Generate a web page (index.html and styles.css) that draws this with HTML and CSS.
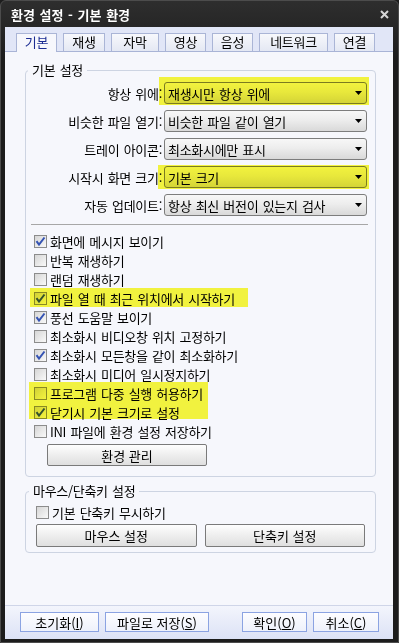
FILE: index.html
```html
<!DOCTYPE html>
<html lang="ko">
<head>
    <meta charset="UTF-8">
    <meta name="viewport" content="width=device-width, initial-scale=1.0">
    <title>환경 설정 - 기본 환경</title>
    <link rel="stylesheet" href="styles.css">
</head>
<body>
    <div class="window">
        <header class="titlebar">
            <span class="title">환경 설정 - 기본 환경</span>
            <svg class="close" width="9" height="9" viewBox="0 0 9 9">
                <path d="M1 1L8 8M8 1L1 8" stroke="#d6d6d6" stroke-width="2"/>
            </svg>
        </header>
        <div class="client">
            <nav class="tabs">
                <span class="tab active">기본</span>
                <span class="tab w42">재생</span>
                <span class="tab w48">자막</span>
                <span class="tab">영상</span>
                <span class="tab">음성</span>
                <span class="tab w69">네트워크</span>
                <span class="tab">연결</span>
            </nav>
            <main class="page">
                <fieldset class="group">
                    <legend>기본 설정</legend>
                    <div class="fields">
                        <label>항상 위에:</label>
                        <div class="combo hl hl-top">재생시만 항상 위에<span class="arrow"></span></div>
                        <label>비슷한 파일 열기:</label>
                        <div class="combo">비슷한 파일 같이 열기<span class="arrow"></span></div>
                        <label>트레이 아이콘:</label>
                        <div class="combo">최소화시에만 표시<span class="arrow"></span></div>
                        <label>시작시 화면 크기:</label>
                        <div class="combo hl hl-size">기본 크기<span class="arrow"></span></div>
                        <label>자동 업데이트:</label>
                        <div class="combo">항상 최신 버전이 있는지 검사<span class="arrow"></span></div>
                    </div>
                    <div class="rule"></div>
                    <div class="checklist">
                        <div class="check"><span class="box"><svg width="11" height="11" viewBox="0 0 11 11"><path d="M1.5 5.2L4 8.5L9.5 1.5" fill="none" stroke="#3553b3" stroke-width="2"/></svg></span>화면에 메시지 보이기</div>
                        <div class="check"><span class="box"></span>반복 재생하기</div>
                        <div class="check"><span class="box"></span>랜덤 재생하기</div>
                        <div class="check hl hl-row"><span class="box"><svg width="11" height="11" viewBox="0 0 11 11"><path d="M1.5 5.2L4 8.5L9.5 1.5" fill="none" stroke="#3553b3" stroke-width="2"/></svg></span>파일 열 때 최근 위치에서 시작하기</div>
                        <div class="check"><span class="box"><svg width="11" height="11" viewBox="0 0 11 11"><path d="M1.5 5.2L4 8.5L9.5 1.5" fill="none" stroke="#3553b3" stroke-width="2"/></svg></span>풍선 도움말 보이기</div>
                        <div class="check"><span class="box"></span>최소화시 비디오창 위치 고정하기</div>
                        <div class="check"><span class="box"><svg width="11" height="11" viewBox="0 0 11 11"><path d="M1.5 5.2L4 8.5L9.5 1.5" fill="none" stroke="#3553b3" stroke-width="2"/></svg></span>최소화시 모든창을 같이 최소화하기</div>
                        <div class="check"><span class="box"></span>최소화시 미디어 일시정지하기</div>
                        <div class="hl hl-pair">
                            <div class="check"><span class="box"></span>프로그램 다중 실행 허용하기</div>
                            <div class="check"><span class="box"><svg width="11" height="11" viewBox="0 0 11 11"><path d="M1.5 5.2L4 8.5L9.5 1.5" fill="none" stroke="#3553b3" stroke-width="2"/></svg></span>닫기시 기본 크기로 설정</div>
                        </div>
                        <div class="check"><span class="box"></span>INI 파일에 환경 설정 저장하기</div>
                    </div>
                    <button class="btn manage">환경 관리</button>
                </fieldset>

                <fieldset class="group keys">
                    <legend>마우스/단축키 설정</legend>
                    <div class="check"><span class="box"></span>기본 단축키 무시하기</div>
                    <div class="btn-row">
                        <button class="btn">마우스 설정</button>
                        <button class="btn">단축키 설정</button>
                    </div>
                </fieldset>
            </main>
            <footer class="actions">
                <button class="btn blue w79">초기화(<u>I</u>)</button>
                <button class="btn blue w104">파일로 저장(<u>S</u>)</button>
                <button class="btn blue w65 ok">확인(<u>O</u>)</button>
                <button class="btn blue w66">취소(<u>C</u>)</button>
            </footer>
        </div>
    </div>
</body>
</html>
```

FILE: styles.css
```css
body {
    margin: 0;
    background-color: #1d1d1d;
    font-family: "Noto Sans CJK KR", "Noto Sans", sans-serif;
    font-size: 13px;
    letter-spacing: -0.3px;
    word-spacing: 1px;
    color: #000;
}
.window {
    width: 399px;
    height: 643px;
    box-sizing: border-box;
    border: 1px solid #4c4c4c;
    border-radius: 6px 6px 0 0;
    background: linear-gradient(#2e2e2e, #1c1c1c 60px, #1c1c1c);
    display: flex;
    flex-direction: column;
}
.titlebar {
    height: 26px;
    flex-shrink: 0;
    display: flex;
    align-items: center;
    justify-content: space-between;
    padding: 0 9px 0 10px;
}
.title {
    color: #fff;
    font-weight: bold;
    letter-spacing: 0;
}
.client {
    flex: 1;
    margin: 0 5px 3px 4px;
    background-color: #f6f7fc;
    display: flex;
    flex-direction: column;
}
.tabs {
    height: 25px;
    box-sizing: border-box;
    padding: 6px 0 0 11px;
    background-color: #e1e6f7;
    border-bottom: 1px solid #a9b4d6;
    display: flex;
    gap: 6px;
}
.tab {
    width: 41px;
    box-sizing: border-box;
    border: 1px solid #aab5d6;
    border-bottom: none;
    background: linear-gradient(#f7f8fc, #e4e8f3);
    text-align: center;
    line-height: 16px;
}
.tab.w42 { width: 42px; }
.tab.w48 { width: 48px; }
.tab.w69 { width: 69px; }
.tab.active {
    background: #f6f7fc;
    color: #1b2c92;
    margin-bottom: -1px;
}
.page {
    flex: 1;
    padding: 11px 17px 0 20px;
}
.group {
    margin: 0;
    padding: 5px 8px 10px;
    min-width: 0;
    border: 1px solid #cdd4e2;
    border-radius: 4px;
}
.group legend {
    padding: 0 4px;
    margin-left: -6px;
    line-height: 14px;
}
.fields {
    display: grid;
    grid-template-columns: 1fr 203px;
    gap: 6px 2px;
    align-items: center;
}
.fields label {
    text-align: right;
}
.combo {
    height: 22px;
    box-sizing: border-box;
    border: 1px solid #7d7d7d;
    border-radius: 3px;
    background: linear-gradient(#f7f7f7, #ededed 45%, #d9d9d9);
    padding-left: 3px;
    display: flex;
    align-items: center;
}
.arrow {
    width: 7px;
    height: 4px;
    margin: 0 4px 0 auto;
    background: #000;
    clip-path: polygon(0 0, 100% 0, 50% 100%);
}
.rule {
    height: 1px;
    background-color: #a7a7a7;
    margin: 8px -1px 0 -3px;
}
.checklist {
    margin-top: 7px;
}
.check {
    height: 19px;
    display: flex;
    align-items: center;
    gap: 3px;
}
.box {
    width: 13px;
    height: 13px;
    flex-shrink: 0;
    box-sizing: border-box;
    border: 1px solid #8c8c8c;
    background: linear-gradient(135deg, #d6d6d6, #f9f9f9);
    display: flex;
    align-items: center;
    justify-content: center;
}
.btn {
    font: inherit;
    color: #000;
    padding: 0;
    box-sizing: border-box;
    border: 1px solid #7a7a7a;
    border-radius: 2px;
    background: linear-gradient(#fefefe, #eeeeee 50%, #dfdfdf);
}
.manage {
    display: block;
    width: 160px;
    height: 22px;
    margin: 3px 0 0 13px;
}
.keys {
    margin-top: 7px;
    padding: 5px 10px 5px;
}
.keys legend {
    margin-left: -7px;
}
.btn-row {
    display: grid;
    grid-template-columns: 1fr 1fr;
    gap: 8px;
    margin-top: 2px;
}
.btn-row .btn {
    height: 23px;
}
.actions {
    height: 34px;
    box-sizing: border-box;
    border-top: 1px solid #cfd5e8;
    background: linear-gradient(#f3f5fc, #dce2f6);
    padding: 6px 14px 0 15px;
    display: flex;
    gap: 6px;
    align-items: flex-start;
}
.btn.blue {
    height: 20px;
    border: 1px solid #8ba3e2;
    border-radius: 0;
    background: linear-gradient(#fdfdff, #eef1fb);
}
.btn u {
    text-underline-offset: 1px;
}
.w79 { width: 79px; }
.w104 { width: 104px; }
.w65 { width: 65px; }
.w66 { width: 66px; }
.ok {
    margin-left: auto;
}

/* yellow marker over parts of the screenshot */
.hl {
    position: relative;
}
.hl::after {
    content: "";
    position: absolute;
    background-color: #fafa40;
    mix-blend-mode: multiply;
    pointer-events: none;
}
.hl-top::after { inset: -6px -3px -2px -6px; }
.hl-size::after { inset: -2px -3px -2px -7px; }
.hl-row::after { top: -1px; left: -4px; width: 218px; height: 19px; }
.hl-pair::after { top: -2px; left: -5px; width: 179px; bottom: 3px; }
```
